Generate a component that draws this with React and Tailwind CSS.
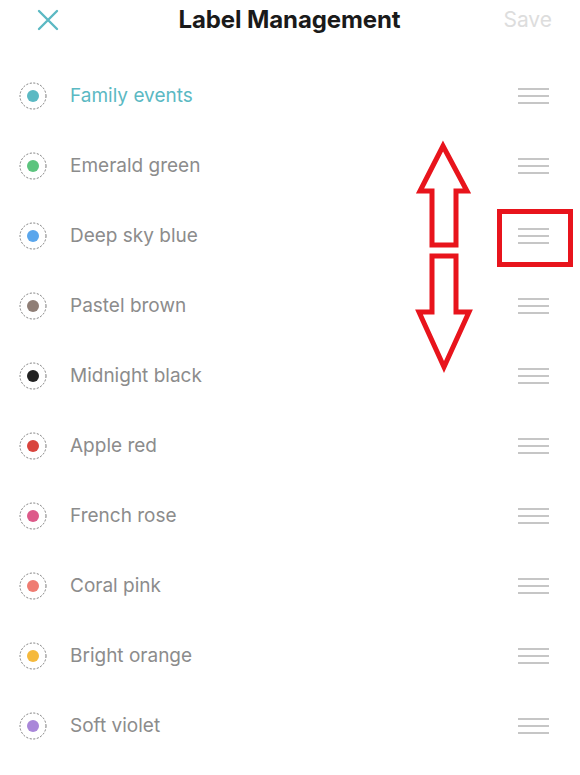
const LABELS = [
  { name: 'Family events', dot: 'bg-[#5bb9c3]', active: true },
  { name: 'Emerald green', dot: 'bg-[#5cc47e]' },
  { name: 'Deep sky blue', dot: 'bg-[#5aa6ec]' },
  { name: 'Pastel brown', dot: 'bg-[#8f7e76]' },
  { name: 'Midnight black', dot: 'bg-[#222222]' },
  { name: 'Apple red', dot: 'bg-[#d9443d]' },
  { name: 'French rose', dot: 'bg-[#dd5a8a]' },
  { name: 'Coral pink', dot: 'bg-[#ef7c72]' },
  { name: 'Bright orange', dot: 'bg-[#f5b93c]' },
  { name: 'Soft violet', dot: 'bg-[#a987d9]' },
];

function Handle() {
  return (
    <div className="flex w-[31px] flex-col gap-[5px]">
      <span className="h-[2px] w-full bg-[#c6c6c6]" />
      <span className="h-[2px] w-full bg-[#c6c6c6]" />
      <span className="h-[2px] w-full bg-[#c6c6c6]" />
    </div>
  );
}

function Swatch({ dot }) {
  return (
    <div className="relative flex h-[28px] w-[28px] items-center justify-center">
      <svg className="absolute left-0 top-0" width="28" height="28" viewBox="0 0 28 28">
        <circle cx="14" cy="14" r="13" fill="none" stroke="#7a7a7a" strokeWidth="1" strokeDasharray="2 1.6" />
      </svg>
      <span className={`h-[12px] w-[12px] rounded-full ${dot}`} />
    </div>
  );
}

export default function App() {
  return (
    <div className="relative h-[775px] w-[580px] overflow-hidden bg-white" style={{ fontFamily: 'Inter, "Liberation Sans", sans-serif' }}>
      {/* Header */}
      <div className="grid h-[40px] grid-cols-[1fr_auto_1fr] items-center pl-[37px] pr-[28px]">
        <svg width="22" height="22" viewBox="0 0 22 22" className="text-[#5bb9c3]">
          <path d="M2 2 L20 20 M20 2 L2 20" stroke="currentColor" strokeWidth="2.4" strokeLinecap="round" />
        </svg>
        <h1 className="pr-[10px] text-[24px] font-bold tracking-[-0.1px] text-[#1a1a1a]">Label Management</h1>
        <span className="justify-self-end text-[21px] text-[#dddddd]">Save</span>
      </div>

      {/* Label list */}
      <div className="mt-[20px] flex flex-col">
        {LABELS.map((l) => (
          <div key={l.name} className="flex h-[70px] items-center pl-[19px] pr-[31px] pt-[2px]">
            <Swatch dot={l.dot} />
            <span className={`ml-[23px] flex-1 text-[19px] ${l.active ? 'text-[#5bb9c3]' : 'text-[#8c8c8c]'}`}>{l.name}</span>
            <Handle />
          </div>
        ))}
      </div>

      {/* Annotation overlay */}
      <svg className="pointer-events-none absolute left-0 top-0" width="580" height="775" viewBox="0 0 580 775">
        <g fill="none" stroke="#e8141c" strokeWidth="5" strokeLinejoin="miter">
          <polygon points="443,146 467,191 456,191 456,245 432,245 432,191 420,191" />
          <polygon points="432,256 456,256 456,312 469,312 444,367 419,312 432,312" />
          <rect x="499.5" y="211.5" width="71" height="53" />
        </g>
      </svg>
    </div>
  );
}
